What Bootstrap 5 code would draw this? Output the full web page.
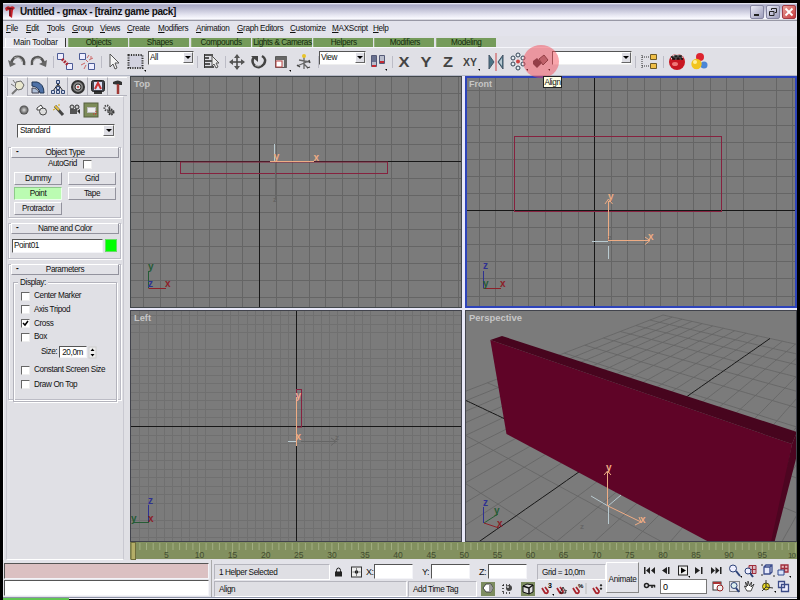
<!DOCTYPE html>
<html lang="en">
<head>
<meta charset="utf-8">
<title>Untitled - gmax</title>
<link href="https://cdn.jsdelivr.net/npm/bootstrap@5.3.0/dist/css/bootstrap.min.css" rel="stylesheet">
<style>
body{margin:0;background:#000;font:8.2px/10px "Liberation Sans",Arial,sans-serif;letter-spacing:-.4px;color:#111;overflow:hidden}
svg{display:block;flex:none;overflow:visible}
svg text{letter-spacing:0;font-family:"Liberation Sans",Arial,sans-serif}
.app{width:800px;height:600px;padding:3px 3px 0 3px}
.titlebar{height:18px;background:linear-gradient(#f4f4fb 0,#a9a9c6 2px,#b9b9d0 5px,#e6e6f1 12px,#fbfbff 16px,#777788 18px);padding:0 1px 0 2px}
.caption{font-size:10px;letter-spacing:-.36px;font-weight:700;width:633px;padding-left:4px;line-height:18px}
.winbtn{width:14px;height:14px;border-radius:2px;border:1px solid #8585a2;background:linear-gradient(135deg,#e9e9f6,#9d9dbb);margin-right:2px}
.winbtn.close-x{background:linear-gradient(135deg,#e9a19b,#c6383a);border-color:#a03a45;margin-right:0}
.menurow{height:15px;background:#e3e3ec;padding:3px 0 0 3px;letter-spacing:-.33px}
.menurow span::first-letter{text-decoration:underline}
.tabrow{height:12px;background:#e1e1e8;padding:2px 0 0 2px;border-bottom:1px solid #f6f6fb}
.tabcell{width:60px;height:9px;margin-right:1.3px;background:#759b5b;text-align:center;color:#132a0c;line-height:10px;border-left:1px solid #91b078;letter-spacing:-.32px}
.tabcell.on{width:61px;background:#ececf2;color:#111;border-right:1.5px solid #333;border-left:1px solid #fff;margin-right:2px;letter-spacing:-.2px}
.tools{height:28px;background:#e0e0e6;padding-left:2px;border-bottom:1px solid #b5b9c6}
.tools>svg{margin-top:3px}
.vsep{width:4px;height:12px;margin-top:8px;flex:none;border-right:1px solid #bcbcc6}
.dropbox{height:14px;margin-top:3px;background:#fff;border:1px solid #eee;border-top-color:#555;border-left-color:#555;padding-left:1px;line-height:12px;flex:none}
.droparrow{width:10px;height:11px;background:#dedee4;border:1px solid #fff;border-right-color:#666;border-bottom-color:#666;display:flex;align-items:center;justify-content:center}
.droparrow::after{content:"";border:3px solid transparent;border-top:3px solid #000;border-bottom:0}
.midrow{height:484px;background:#e0e0e6}
.side{width:127px;background:#e0e0e5;flex:none;border-left:1px solid #f4f4f8}
.sideframe{width:118px;margin-left:2px;height:464px;border:1px solid #fff;border-left-color:#c9c9d1;border-right-color:#c9c9d1}
.cmdtab{width:20px;height:19px;border-left:1px solid #b0b0ba;border-top:1px solid #fff;border-bottom:1px solid #b3b3bd;display:flex;align-items:center;justify-content:center}
.cmdtab.on{border-bottom:0}
.roll{margin:0 2px 0 1px;border:1px solid #bcbcc5;box-shadow:inset 1px 1px #fff,1px 1px #fff}
.rollhead{height:11px;border:1px solid #fff;border-right-color:#92929d;border-bottom-color:#92929d;background:#e2e2e7;text-align:center;position:relative;margin:-1px 1px 0 2px;line-height:10px}
.rollhead::before{content:"-";position:absolute;left:4px;top:-1px;font-weight:700}
.objbtn{width:48px;height:13px;border:1px solid #fff;border-right-color:#92929d;border-bottom-color:#92929d;text-align:center;line-height:12px;background:#e0e0e5}
.objbtn.on{background:#bbfcb2;border-color:#8ec98a #eaffea #eaffea #8ec98a}
.inset{background:#fff;border:1px solid #f4f4f8;border-top-color:#555;border-left-color:#555}
.chk{width:9px;height:9px;background:#fff;border:1px solid #eee;border-top-color:#666;border-left-color:#666;flex:none}
.opt{height:10px;margin-bottom:3.8px;gap:4px;align-items:center;display:flex;white-space:nowrap}
.paramset{border:1px solid #b3b3bc;box-shadow:inset 1px 1px #fff,1px 1px #fff;margin:7px 3px 0 4px;height:120px;padding:0 0 0 7px}
.paramset .leg{margin:-5px 0 3px -3px;background:#e0e0e5;display:block;width:30px;padding-left:2px;position:relative}
.views{display:grid;grid-template-columns:332px 332px;grid-template-rows:232px 232px;column-gap:3px;row-gap:2px;background:#e8e8f8;width:667px;height:466px}
.views svg{overflow:hidden}
.foot{height:37px;background:#e3e3e9}
.field{border:1px solid #b5b5bd;border-right-color:#fff;border-bottom-color:#fff;background:#dfdfe4;padding-left:4px;height:16px;line-height:15px;white-space:nowrap;flex:none}
.animbtn{width:33px;height:31px;border:1px solid #fff;border-right-color:#888;border-bottom-color:#888;line-height:33px;text-align:center;margin:0 3px;letter-spacing:-.3px}
.tasks{height:2px;background:#f4f4fa;border-top:1px solid #8d93a8}
.halo{position:absolute;left:523px;top:45px;width:36px;height:33px;border-radius:50%;background:rgba(244,75,88,.5)}
.tip{position:absolute;left:543px;top:76px;width:19px;height:12px;background:#ffffe6;border:1px solid #222;line-height:11px;text-align:center}
</style>
<script src="https://cdn.jsdelivr.net/npm/bootstrap@5.3.0/dist/js/bootstrap.bundle.min.js"></script>
</head>
<body>
<div class="app d-flex flex-column position-relative">
<header class="titlebar d-flex align-items-center">
<svg width="11" height="14"><path d="M0 3Q3 0 5 2Q8 0 10 3L8 5L7 13L4 11L4 5L1 6Z" fill="#c4212a"/><path d="M5 3V11M2 3L8 4" stroke="#5b1018"/></svg>
<div class="caption flex-grow-1">Untitled - gmax - [trainz game pack]</div>
<div class="winbtn"><svg width="12" height="12"><path d="M3 9h5" stroke="#222" stroke-width="2"/></svg></div>
<div class="winbtn"><svg width="12" height="12"><path d="M4.500 4V2.500H9.500V6.500H8M2.500 5.500H7V9.500H2.500Z" fill="none" stroke="#222"/></svg></div>
<div class="winbtn close-x"><svg width="12" height="12"><path d="M2.500 2.500L9.500 9.500M9.500 2.500L2.500 9.500" stroke="#fff" stroke-width="1.800"/></svg></div>
</header>
<nav class="menurow d-flex" id="menu"></nav>
<div class="tabrow d-flex"><div class="tabcell on">Main Toolbar</div><div class="tabcell">Objects</div><div class="tabcell">Shapes</div><div class="tabcell">Compounds</div><div class="tabcell text-nowrap" style="letter-spacing:-.42px">Lights &amp; Cameras</div><div class="tabcell">Helpers</div><div class="tabcell">Modifiers</div><div class="tabcell">Modeling</div></div>
<div class="tools d-flex">
<svg width="23" height="22"><path d="M6 13Q8 4 15 6Q20 8 19 14" fill="none" stroke="#555" stroke-width="2.500"/><path d="M9 7Q15 4 17 11" fill="none" stroke="#aaa"/><path d="M3 9L11 13L5 16Z" fill="#666"/></svg>
<svg width="22" height="22"><path d="M4 14Q3 6 10 6Q15 7 16 13" fill="none" stroke="#555" stroke-width="2.500"/><path d="M5 11Q8 5 13 8" fill="none" stroke="#aaa"/><path d="M11 13L19 9L18 16Z" fill="#666"/></svg>
<i class="vsep"></i>
<svg width="22" height="22"><g fill="#eef" stroke="#4c5b95"><path d="M3.500 2.500h6v6h-6zM12.500 12.500h6v6h-6z"/></g><path d="M8 8L14 14" stroke="#aa2631" stroke-width="3" stroke-dasharray="2 1"/></svg>
<svg width="22" height="22"><g fill="#eef" stroke="#4c5b95"><path d="M3.500 2.500h6v6h-6zM12.500 12.500h6v6h-6z"/></g><path d="M11 7l2-3M13 9l4-2M9 12l-4 2M10 14l-2 4M10 9l2 2M15 5v3" stroke="#c66"/></svg>
<i class="vsep"></i>
<svg width="22" height="22"><path d="M8 3V16L11 13L13 18L15 17L13 12H17Z" fill="#f4f4f4" stroke="#555"/></svg>
<svg width="24" height="22"><rect x="4.500" y="4" width="14" height="13" fill="#d2d2e0" stroke="#333" stroke-width="2" stroke-dasharray="1.200 1.200"/><path d="M20 19h2v2z"/></svg>
<div class="dropbox d-flex justify-content-between" style="width:46px">All<i class="droparrow"></i></div>
<i class="vsep"></i><i style="width:2px"></i>
<svg width="22" height="22"><path d="M4 4h9M4 7h5M4 10h8M4 13h6M4 16h10" stroke="#555" stroke-width="2"/><path d="M4.500 3v14" stroke="#333"/><path d="M12 5v10l2-2 2 4 2-1-2-4h3z" fill="#eee" stroke="#555"/></svg>
<i class="vsep"></i>
<svg width="22" height="22"><path d="M11 4v14M4 11h14" stroke="#444" stroke-width="1.500"/><path d="M11 3l3 4H8zM11 19l3-4H8zM3 11l4-3v6zM19 11l-4-3v6z" fill="#555"/></svg>
<svg width="22" height="22"><path d="M6 6Q3 10 6 14Q11 19 16 13Q19 8 14 5" fill="none" stroke="#444" stroke-width="2.500"/><path d="M3 5h7v6z" fill="#444"/><path d="M7 14Q11 17 15 12" fill="none" stroke="#bbb"/></svg>
<svg width="23" height="22"><path d="M5.500 5.500h11v11h-11z" fill="#ddd" stroke="#555"/><path d="M6 5.500h11v11h-3V9H6z" fill="#666"/><rect x="6" y="10" width="6" height="6" fill="#fff" stroke="#b44"/><path d="M19 19h2v2z"/></svg>
<svg width="22" height="22"><path d="M11 4v14M6 9l11 2M4 15l12-5M10 12l5 5" stroke="#666" stroke-width="1.300"/><circle cx="11" cy="5" r="2" fill="#e8c329"/><path d="M4 14l3 2M14 17l3-1M16 9l1 3" stroke="#444" stroke-width="1.300"/></svg>
<i class="vsep"></i>
<div class="dropbox d-flex justify-content-between" style="width:47px">View<i class="droparrow"></i></div>
<svg width="23" height="22"><path d="M5.500 4.500h5v11h-5zM13.500 4.500h5v8h-5z" fill="#b9bdcc" stroke="#555a77"/><path d="M6 5h4v6H6z" fill="#68708f"/><path d="M6 15h4M14 11h4" stroke="#c32b34" stroke-width="2"/><path d="M19 18h2v2z"/></svg>
<i class="vsep"></i>
<svg width="22" height="22"><text x="5.500" y="16" font-size="15" font-weight="700" textLength="11" lengthAdjust="spacingAndGlyphs" fill="#444">X</text></svg>
<svg width="22" height="22"><text x="5.500" y="16" font-size="15" font-weight="700" textLength="11" lengthAdjust="spacingAndGlyphs" fill="#444">Y</text></svg>
<svg width="22" height="22"><text x="6" y="16" font-size="15" font-weight="700" textLength="10" lengthAdjust="spacingAndGlyphs" fill="#444">Z</text></svg>
<svg width="22" height="22"><text x="4" y="15" font-size="11" font-weight="700" textLength="14" lengthAdjust="spacingAndGlyphs" fill="#444">XY</text><path d="M19 18h2v2z"/></svg>
<i class="vsep" style="border:0"></i>
<svg width="22" height="22"><path d="M4 4l5 7-5 7zM18 4l-5 7 5 7z" fill="#4b7486" stroke="#456"/><path d="M17 7l-3 4 3 4z" fill="#b9c9d3"/><path d="M11 2v18" stroke="#c44"/></svg>
<svg width="23" height="22"><g fill="#e5edf3" stroke="#345"><circle cx="11" cy="4" r="2"/><circle cx="6" cy="7" r="2"/><circle cx="16" cy="7" r="2"/><circle cx="6" cy="13" r="2"/><circle cx="16" cy="13" r="2"/><circle cx="11" cy="17" r="2"/></g><circle cx="11" cy="10.500" r="2" fill="#c44"/><path d="M19 18h2v2z"/></svg>
<svg width="22" height="22"><path d="M3 10l4-3 5 5-5 5-4-4z" fill="#343039"/><path d="M9 8l5-4 4 5-5 5z" fill="#8b777c" stroke="#333"/><path d="M18 18h2v2z"/></svg>
<div class="dropbox d-flex justify-content-end" style="width:80px"><i class="droparrow"></i></div>
<i class="vsep"></i><i style="width:2px"></i>
<svg width="22" height="22"><path d="M4 4v14M4 6h8M4 15h8" stroke="#333" stroke-dasharray="1 1"/><path d="M12.500 3.500h6v5h-6zM12.500 12.500h6v5h-6z" fill="#f0bf47" stroke="#6f5b27"/></svg>
<i class="vsep"></i><i style="width:2px"></i>
<svg width="22" height="22"><circle cx="11" cy="11" r="8" fill="#c81722"/><path d="M5 6Q11 0 17 6L15 9L12 6L10 9L7 6L5 9Z" fill="#ddd"/><path d="M5 6h2v2h2v-3h2v3h2v-3h2v3h2" fill="none" stroke="#111" stroke-width="1.500"/><ellipse cx="9" cy="13" rx="3" ry="2" fill="#ef7777"/></svg>
<svg width="22" height="22"><circle cx="12" cy="6" r="4" fill="#dd2530"/><circle cx="16" cy="14" r="3.500" fill="#4b86d6"/><circle cx="8.500" cy="13" r="5.200" fill="#f1c41f"/><circle cx="7" cy="11" r="2" fill="#fff09a"/></svg>
</div>
<div class="midrow d-flex">
<aside class="side">
<div class="d-flex" style="padding:1px 0 0 3px">
<div class="cmdtab on"><svg width="18" height="17"><path d="M3 15L9 9" stroke="#777" stroke-width="2"/><path d="M7 3l5-1 3 4-2 4-4 1-3-3z" fill="#e9e7ce" stroke="#666"/><path d="M2 5l3 2M4 1l2 3" stroke="#777"/></svg></div>
<div class="cmdtab"><svg width="16" height="16"><path d="M2 3h5Q14 5 14 14H10Q9 8 2 7z" fill="#4e71a7" stroke="#1f3656"/><path d="M2 9q6 0 7 5H2z" fill="#aebed6" stroke="#445"/></svg></div>
<div class="cmdtab"><svg width="16" height="16"><path d="M8 4v5M8 5L3 12M8 5l5 7" stroke="#222"/><path d="M6.500 1.500h3v3h-3zM6.500 7.500h3v3h-3zM1.500 11.500h3v3h-3zM6.500 11.500h3v3h-3zM11.500 11.500h3v3h-3z" fill="#cdd5ec" stroke="#334873"/></svg></div>
<div class="cmdtab"><svg width="16" height="16"><circle cx="8" cy="8" r="6" fill="#888" stroke="#333" stroke-width="2"/><circle cx="8" cy="8" r="3" fill="#ddd" stroke="#333"/><circle cx="8" cy="8" r="1" fill="#b33"/></svg></div>
<div class="cmdtab"><svg width="16" height="16"><rect x="1.500" y="1.500" width="13" height="11" rx="2" fill="#42454f" stroke="#222"/><rect x="4" y="3" width="8" height="8" fill="#dae0f4"/><path d="M5 10l3-6 3 6" stroke="#c33" stroke-width="2" fill="none"/><path d="M4 14h8" stroke="#333" stroke-width="2"/></svg></div>
<div class="cmdtab"><svg width="16" height="16"><path d="M3 3Q8 0 12 3v3H9L3 5z" fill="#333"/><path d="M8 5v10" stroke="#a03a36" stroke-width="2.500"/></svg></div>
</div>
<div class="sideframe">
<div class="d-flex" style="padding:5px 0 0 10px;gap:1px">
<svg width="16" height="16"><defs><radialGradient id="sph"><stop stop-color="#ddd"/><stop offset="1" stop-color="#444"/></radialGradient></defs><circle cx="7" cy="8" r="4.500" fill="url(#sph)"/></svg>
<svg width="16" height="16"><path d="M3 6l4-3 3 5H3z" fill="#fff" stroke="#444"/><circle cx="9" cy="9.500" r="3.500" fill="#ddd" stroke="#444"/></svg>
<svg width="15" height="16"><path d="M4 4l8 9" stroke="#444" stroke-width="3"/><path d="M4 4l4 4" stroke="#e5bf3e" stroke-width="2"/><path d="M2 8l2-1M8 2v2" stroke="#d9a900"/></svg>
<svg width="15" height="16"><rect x="3" y="7" width="7" height="5" fill="#555"/><path d="M10 9l3-2v5z" fill="#333"/><circle cx="5" cy="5" r="2" fill="#ccc" stroke="#333"/><circle cx="10" cy="5" r="2" fill="#ccc" stroke="#333"/></svg>
<svg width="17" height="16"><rect x="1" y="1" width="14" height="14" fill="#7d8c58" stroke="#555f3e"/><rect x="4.500" y="5.500" width="8" height="5" fill="#eee" stroke="#bbb"/><path d="M10 12h3M13 9v4" stroke="#c33" stroke-dasharray="1 1"/></svg>
<svg width="15" height="16"><circle cx="6" cy="6" r="2.500" fill="none" stroke="#444" stroke-width="2" stroke-dasharray="1.300 1"/><circle cx="10" cy="10" r="2.500" fill="#777" stroke="#333" stroke-width="2" stroke-dasharray="1.300 1"/></svg>
</div>
<div class="dropbox d-flex justify-content-between" style="width:98px;margin:6px 0 0 10px;padding-left:2px">Standard<i class="droparrow" style="width:11px"></i></div>
<div class="roll" style="margin-top:9px;height:71px">
<div class="rollhead">Object Type</div>
<div class="d-flex align-items-center justify-content-end" style="gap:6px;padding:1px 28px 1px 0;height:12px">AutoGrid<i class="chk"></i></div>
<div class="d-grid" style="grid-template-columns:48px 48px;column-gap:6px;row-gap:2px;padding:2px 0 0 5px"><div class="objbtn">Dummy</div><div class="objbtn">Grid</div><div class="objbtn on">Point</div><div class="objbtn">Tape</div><div class="objbtn">Protractor</div></div>
</div>
<div class="roll" style="margin-top:5px;height:36px"><div class="rollhead">Name and Color</div>
<div class="d-flex" style="gap:2px;padding:5px 0 0 3px"><div class="inset" style="width:91px;height:14px;line-height:12px;padding-left:1px">Point01</div><div style="width:12px;height:13px;background:#0f0;border:1px solid #6d6"></div></div></div>
<div class="roll" style="margin-top:5px;height:136px"><div class="rollhead">Parameters</div>
<div class="paramset"><span class="leg">Display:</span>
<div class="opt"><i class="chk"></i>Center Marker</div><div class="opt"><i class="chk"></i>Axis Tripod</div>
<div class="opt"><i class="chk"><svg width="7" height="7"><path d="M1 3l2 2 3-4" fill="none" stroke="#000" stroke-width="1.500"/></svg></i>Cross</div>
<div class="opt"><i class="chk"></i>Box</div>
<div class="d-flex align-items-center" style="height:12px;margin:2px 0 7px 20px;gap:2px">Size: <div class="inset" style="width:28px;height:12px;line-height:11px;padding-left:2px">20,0m</div><svg width="7" height="11"><rect width="7" height="11" fill="#eee" stroke="#ccc"/><path d="M1.500 4L3.500 1.500L5.500 4zM1.500 7L3.500 9.500L5.500 7z"/></svg></div>
<div class="opt" style="margin-bottom:4.500px">
<i class="chk"></i>Constant Screen Size</div><div class="opt"><i class="chk"></i>Draw On Top</div>
</div></div>
</div>
</aside>
<main>
<div class="views">
<svg id="vTop" viewBox="130 76 332 232"></svg>
<svg id="vFront" viewBox="465 76 332 232"></svg>
<svg id="vLeft" viewBox="130 310 332 232"></svg>
<svg id="vPersp" viewBox="465 310 332 232"></svg>
</div>
<svg id="time" width="667" height="18" viewBox="130 543 667 18" style="overflow:hidden"></svg>
</main>
</div>
<footer class="foot d-flex">
<div style="width:206px;padding:3px 0 0 1px;flex:none"><div class="inset" style="height:16px;background:#dbc0c2"></div><div class="inset" style="height:16px;margin-top:1px"></div></div>
<div style="width:396px;border-left:1px solid #aaa;margin-left:2px;padding:3px 0 0 2px;flex:none">
<div class="d-flex align-items-center" style="height:17px">
<div class="field" style="width:116px">1 Helper Selected</div>
<svg width="19" height="16"><path d="M6.500 8V6.500a2 2.500 0 0 1 4 0V8" fill="none" stroke="#222"/><rect x="5" y="7.500" width="7" height="5" fill="#222"/></svg>
<svg width="17" height="16"><rect x="2.500" y="3" width="10" height="10" fill="#eee" stroke="#333"/><circle cx="7.500" cy="8" r="1.700"/><path d="M7.500 4v8M3.500 8h8" stroke="#555" stroke-width=".7"/></svg>
<span style="width:8px;font-size:9px">X:</span><div class="inset" style="width:39px;height:15px"></div>
<span style="width:9px;margin-left:9px;font-size:9px">Y:</span><div class="inset" style="width:39px;height:15px"></div>
<span style="width:9px;margin-left:9px;font-size:9px">Z:</span><div class="inset" style="width:39px;height:15px"></div>
<div class="field" style="width:69px;margin-left:10px">Grid = 10,0m</div>
</div>
<div class="d-flex" style="margin-top:1px"><div class="field" style="width:193px">Align</div><div class="field" style="width:69px;margin-left:1px">Add Time Tag</div>
<svg width="20" height="16" style="margin-left:3px"><rect x="1" y="1" width="14" height="14" fill="#7d8d60"/><path d="M3 7l3-4h5l2 4-2 4H6z" fill="#fff" stroke="#444"/><path d="M9 4h2l2 3-2 4H9z" fill="#999"/></svg>
<svg width="20" height="16"><path d="M3 4h7M3 12h7M3 4v8" stroke="#222" stroke-dasharray="1 2" stroke-width="1.500"/><circle cx="9" cy="7" r="3" fill="#444"/><circle cx="8" cy="6" r="1" fill="#ddd"/></svg>
<svg width="19" height="16"><rect x="1" y="1" width="14" height="14" fill="#7d8d60"/><path d="M3 5l4-2 6 1v7l-4 2-6-2z" fill="#ddd" stroke="#111"/><path d="M3 5l6 2v6M9 7l4-3" fill="none" stroke="#111" stroke-width="1.500"/></svg>
<svg width="68" height="16"><g fill="none" stroke="#a9242d" stroke-width="1.800"><path id="mg" d="M3 7l3 5q3 1 3-2L6 6"/><use href="#mg" x="15"/><use href="#mg" x="31"/><use href="#mg" x="51"/></g><text x="9" y="7" font-size="7" font-weight="700">3</text><path d="M24 6l-3 6h6zM26 9l2 1" fill="none" stroke="#111" stroke-width=".8"/><text x="39" y="7" font-size="6" font-weight="700">%</text><path d="M62 3l1 2h-2zM62 9l1-2h-2z" stroke="#222" stroke-width=".5"/><path d="M47 2v11" stroke="#bbb"/><path d="M13 13h2v2z"/></svg>
</div></div>
<div class="animbtn" style="margin-top:2px;margin-left:-1px">Animate</div>
<div style="padding-top:2px">
<svg width="154" height="34" viewBox="646 563 154 34" id="play">
<g fill="#222"><path d="M648 568h1.500v7H648zM654 568v7l-4-3.500zM659 568v7l-4-3.500zM671 568v7l-5-3.500zM672 568h1.500v7H672zM699 568v7l5-3.500zM705 568h1.500v7H705zM715 568v7l4-3.500zM719.500 568v7l4-3.500zM724 568h1.500v7H724z"/></g>
<rect x="682.500" y="567" width="9" height="9" fill="#eee" stroke="#222"/><path d="M685 568.500v6l5-3z"/>
<circle cx="650.500" cy="586.500" r="2" fill="none" stroke="#222" stroke-width="1.500"/><path d="M653 586.500h6M656 586v3M658.500 586v2.500" stroke="#222" stroke-width="1.500"/>
<rect x="664.500" y="580.500" width="46" height="14" fill="#fff" stroke="#777"/><text x="667" y="590.500" font-size="9">0</text>
<rect x="717" y="583" width="8" height="8" fill="#fff" stroke="#333"/><path d="M717 584h8" stroke="#a33" stroke-width="2"/><circle cx="724" cy="589" r="3" fill="#eee" stroke="#922"/>
<g fill="none"><circle cx="737" cy="569.500" r="3.500" fill="#eef" stroke="#2c4177"/><path d="M740 572l4 5" stroke="#2c4177" stroke-width="2"/>
<path d="M753 566.500h7v8h-7zM753 570.500h7M756.500 566v8" fill="#d8b9c3" stroke="#a02d3b"/><circle cx="752" cy="572" r="3" fill="#eef" stroke="#2c4177"/><path d="M754 574l3 4" stroke="#2c4177" stroke-width="2"/>
<path d="M768 568l2-2h6v7l-2 2h-6zM768 568h6v7M774 568l2-2" fill="#e6e9fb" stroke="#3d4d8c" stroke-width="1.300"/><path d="M765 566h2M777 577h2M765 576h2" stroke="#333"/>
<path d="M785 566h7v7h-7zM785 569.500h7M788.500 566v7" fill="#e8bcc0" stroke="#a02d3b" stroke-width="1.300"/><path d="M782 571h6v5h-6z" fill="#d9e2fa" stroke="#334b8d"/>
<rect x="733.500" y="582.500" width="10" height="10" stroke="#222" stroke-dasharray="1 1"/><circle cx="738" cy="586.500" r="3" fill="#dee" stroke="#2c4177"/><path d="M740 589l3 4" stroke="#2c4177" stroke-width="2"/>
<path d="M751 592q-2-3-2.500-5l2 1-1-5 2 4 .5-5 1.500 5 2-4-.5 5 3-3-3 7z" fill="#fff" stroke="#222" stroke-width=".8"/>
<circle cx="770" cy="587.500" r="3.500" fill="#e9d922" stroke="#544d12"/><path d="M770 581v7l-4 4M770 588l7 1" stroke="#333"/>
<path d="M782.500 582.500h6v6h-6zM785.500 585.500h7v7h-7z" fill="#eef" stroke="#3c4b88" stroke-width="1.300"/></g>
<path d="M692 577h2v2zM744 577h2v2zM778 592h2v2zM793 577h2v2z"/>
</svg></div>
</footer>
<div class="tasks d-flex"><div style="width:66px;height:3px;background:#61c653"></div></div>
<i class="halo"></i><div class="tip">Align</div>
</div>
<script>
document.getElementById('menu').innerHTML=[['File',20],['Edit',21],['Tools',25],['Group',28],['Views',27],['Create',31],['Modifiers',38],['Animation',41],['Graph Editors',53],['Customize',42],['MAXScript',41],['Help',30]].map(m=>`<span class="d-inline-block text-nowrap" style="width:${m[1]}px">${m[0]}</span>`).join('');
const line=(x1,y1,x2,y2,c,w=1)=>`<path d="M${x1} ${y1}L${x2} ${y2}" stroke="${c}" stroke-width="${w}" fill="none"/>`;
const label=(x,y,t,c,s=10)=>`<text x="${x}" y="${y}" fill="${c}" font-size="${s}" font-weight="700">${t}</text>`;
const title=(x,y,t,w)=>`<text x="${x}" y="${y}" fill="#c6c6c6" font-size="9" font-weight="700" textLength="${w}" lengthAdjust="spacingAndGlyphs">${t}</text>`;
const frame=(x,y,c,w)=>`<rect x="${x+w/2}" y="${y+w/2}" width="${332-w}" height="${232-w}" fill="none" stroke="${c}" stroke-width="${w}"/>`;
// Orthographic view background: grid through (cx,cy)
function grid(x,y,cx,cy,px,py,minor,major){
  let s=`<rect x="${x}" y="${y}" width="332" height="232" fill="#7b7b7b"/>`;
  for(const pass of [0,1]) for(let i=-45;i<=45;i++){
    if((i%10===0&&major)!=pass||(!major&&pass))continue;
    const c=pass?major:minor,gx=Math.round(cx+i*px-.5)+.5,gy=Math.round(cy+i*py-.5)+.5;
    if(gx>x&&gx<x+332)s+=line(gx,y,gx,y+232,c);
    if(gy>y&&gy<y+232)s+=line(x,gy,x+332,gy,c);
  }
  return s+line(cx,y,cx,y+232,'#171717')+line(x,cy,x+332,cy,'#171717');
}
const M='#86223f',O='#eeac84',L='#b9cad0',R='#8c2028',B='#2f3191',G='#255c35';
vTop.innerHTML=grid(130,76,259.5,161.5,16.55,17.05,'#656565')+`<rect x="180.500" y="162" width="207" height="11.500" fill="none" stroke="${M}"/>`
 +line(274.5,144,274.5,162,L)+line(270,161.5,314,161.5,O)+label(273.800,160,'y',O)+label(313.500,161,'x',O)+line(275.500,163,275.500,198,'#656565')+label(273,202,'z','#646464',8)
 +line(148.500,271,148.500,288,G)+line(148.500,288.500,166,288.500,R)+label(148,270,'y',G)+label(148,287,'z',B)+label(165,287,'x',R)+title(134,87,'Top',16)+frame(130,76,'#41464a',1);
vFront.innerHTML=grid(465,76,594.5,210.5,16.5,17.1,'#656565')+`<rect x="514.500" y="136.500" width="207" height="75" fill="none" stroke="${M}"/>`
 +line(592,241.500,608,241.500,L)+line(608.500,246,608.500,259,L)+line(608.500,241,608.500,201,O)+line(608,240.500,650,240.500,O)+`<path d="M605 204l3.500-5 4 5M645 237l5 3.500-5 4" fill="none" stroke="${O}"/>`+label(608,200,'y',O)+label(648,240,'x',O)+label(608,240,'z','#666',8)
 +line(483.500,271,483.500,288,B)+line(483.500,288.500,501,288.500,R)+label(483,269,'z',B)+label(483,287,'y',G)+label(500,287,'x',R)+title(469,87,'Front',23)+frame(465,76,'#2d43ba',2);
vLeft.innerHTML=grid(130,310,296.5,426.5,8.25,8.53,'#707070','#595959')+`<rect x="296.500" y="389.500" width="5" height="37.500" fill="none" stroke="${M}"/>`
 +line(288,441.500,297,441.500,L)+line(296.5,446,296.5,397,O)+label(295.500,399,'y','#f3aa97')+label(295.500,440,'x',O)+line(301,441.500,337,441.500,'#656565')+label(335,440,'z','#666',8)+`<path d="M331 438l5 3.500-5 4" fill="none" stroke="#666"/>`
 +line(148.500,505,148.500,522,B)+line(133,522.500,149,522.500,G)+label(148,504,'z',B)+label(131,522,'y',G)+label(148,522,'x',R)+title(134,321,'Left',17)+frame(130,310,'#41434c',1);
// Perspective floor: unit square mapped onto the far-left quadrant of the ground plane
(function(){
 const N=10,p=[[594.3,461.2],[455,395.3],[663,315],[770,338.5]];
 const dx1=p[1][0]-p[2][0],dy1=p[1][1]-p[2][1],dx2=p[3][0]-p[2][0],dy2=p[3][1]-p[2][1];
 const sx=p[0][0]-p[1][0]+p[2][0]-p[3][0],sy=p[0][1]-p[1][1]+p[2][1]-p[3][1],d=dx1*dy2-dx2*dy1;
 const g=(sx*dy2-dx2*sy)/d,h=(dx1*sy-sx*dy1)/d;
 const a=p[1][0]-p[0][0]+g*p[1][0],b=p[3][0]-p[0][0]+h*p[3][0],dd=p[1][1]-p[0][1]+g*p[1][1],e=p[3][1]-p[0][1]+h*p[3][1];
 function run(f,c){let s='',pen='M';for(let t=-1;t<=1.0001;t+=.02){const [u,v]=f(t),w=g*u+h*v+1;if(w<.08){pen='M';continue}
  s+=`${pen}${((a*u+b*v+p[0][0])/w).toFixed(1)} ${((dd*u+e*v+p[0][1])/w).toFixed(1)}`;pen='L'}return `<path d="${s}" fill="none" stroke="${c}" stroke-width="${c==='#171717'?1:.8}"/>`}
 let s='<rect x="465" y="310" width="332" height="232" fill="#7b7b7b"/>';
 for(let i=-N;i<=N;i++)if(i)s+=run(t=>[i/N,t],'#636363')+run(t=>[t,i/N],'#636363');
 s+=run(t=>[0,t],'#171717')+run(t=>[t,0],'#171717');
 s+='<path d="M490.300 340L792 444L774 542H709L506.500 434Z" fill="#5f0427"/><path d="M490.300 340L502 336L797 432L792 444Z" fill="#47051e"/><path d="M792 444L797 432V455L774.500 542H771Z" fill="#4d0521"/>';
 s+=line(591,496,608,506,L)+line(608,506,621,495,L)+line(608.500,506,608.500,524,L)+line(607.500,506,607.500,473,O)+line(608,506,641,522,O)+`<path d="M604 475l3.500-4 3.500 4M639 517l2 5-6 3" fill="none" stroke="${O}"/>`+label(606,471,'y',O)+label(640,523,'x',O)+label(580,529,'z','#666',8)
 +line(483.500,507,483.500,523,B)+line(484,523,498,514,G)+line(484,523,499,528,R)+label(483,506,'z',B)+label(494,514,'y',G)+label(497,527,'x',R)+title(469,321,'Perspective',53)+frame(465,310,'#41434c',1);
 vPersp.innerHTML=s;
})();
(function(){
 let s='<rect x="130" y="543" width="667" height="17" fill="#82905f"/>';
 for(let i=0;i<=100;i++){const x=(133.3+i*6.62).toFixed(1);s+=line(x,544,x,i%5?551:554,'#a9b68c',.8);
  if(i&&i%5===0&&i<100)s+=`<text x="${x}" y="559" text-anchor="middle" font-size="8.500" fill="#434d30">${i}</text>`}
 s+='<text x="788" y="559" font-size="8" textLength="8" fill="#434d30">10</text>';
 s+='<rect x="131" y="543.500" width="4.500" height="17" fill="#b4ae68" stroke="#6f6d3d"/>';
 document.getElementById('time').innerHTML=s;
})();
</script>
</body>
</html>
